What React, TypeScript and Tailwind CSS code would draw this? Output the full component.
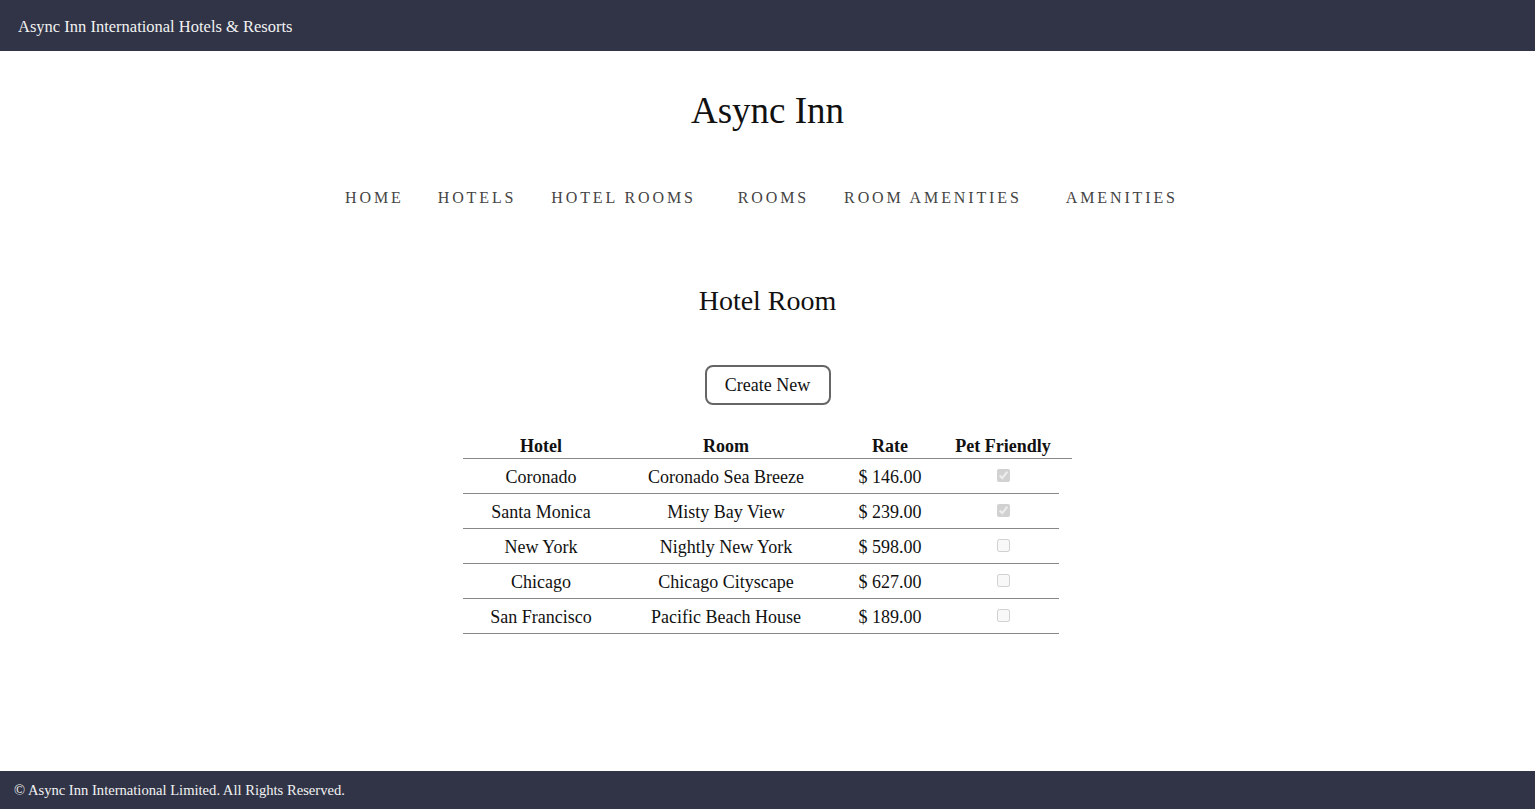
const rooms = [
  { hotel: 'Coronado', room: 'Coronado Sea Breeze', rate: '146.00', pets: true },
  { hotel: 'Santa Monica', room: 'Misty Bay View', rate: '239.00', pets: true },
  { hotel: 'New York', room: 'Nightly New York', rate: '598.00', pets: false },
  { hotel: 'Chicago', room: 'Chicago Cityscape', rate: '627.00', pets: false },
  { hotel: 'San Francisco', room: 'Pacific Beach House', rate: '189.00', pets: false },
];

const navItems = [
  { label: 'Home', className: '' },
  { label: 'Hotels', className: 'ml-[34px]' },
  { label: 'Hotel Rooms', className: 'ml-[35px]' },
  { label: 'Rooms', className: 'ml-[42px]' },
  { label: 'Room Amenities', className: 'ml-[35px]' },
  { label: 'Amenities', className: 'ml-[44px]' },
];

export default function App() {
  return (
    <div className="flex h-screen flex-col bg-white font-['Liberation_Serif',serif] text-[#111]">
      {/* Top bar */}
      <header className="flex h-[51px] shrink-0 items-center bg-[#303446] px-[18px] pt-[3px]">
        <span className="text-[16.5px] text-[#f2f2f2]">Async Inn International Hotels &amp; Resorts</span>
      </header>

      <main className="flex flex-1 flex-col items-center">
        <h1 className="mt-[36px] text-[37px] leading-[48px]">Async Inn</h1>

        <nav className="mt-[51px] flex items-center pr-[12px]">
          {navItems.map((item) => (
            <a
              key={item.label}
              href="#"
              className={`text-[16px] uppercase leading-[24px] tracking-[0.18em] text-[#444] ${item.className}`}
            >
              {item.label}
            </a>
          ))}
        </nav>

        <h2 className="mt-[73px] text-[28px] leading-[36px]">Hotel Room</h2>

        <button className="mt-[46px] h-[40px] w-[126px] rounded-[8px] border-2 border-[#666] text-[18px]">
          Create New
        </button>

        <table className="mt-[27px] border-collapse text-[18px]">
          <thead>
            <tr className="h-[26px] align-bottom">
              <th className="w-[156px] border-b border-[#888] font-bold leading-[24px]">Hotel</th>
              <th className="w-[214px] border-b border-[#888] font-bold leading-[24px]">Room</th>
              <th className="w-[114px] border-b border-[#888] font-bold leading-[24px]">Rate</th>
              <th className="w-[112px] whitespace-nowrap border-b border-[#888] font-bold leading-[24px]">Pet Friendly</th>
              <th className="w-[13px] border-b border-[#888]"></th>
            </tr>
          </thead>
          <tbody>
            {rooms.map((r) => (
              <tr key={r.hotel} className="h-[35px]">
                <td className="border-b border-[#888] pt-[3px] text-center">{r.hotel}</td>
                <td className="border-b border-[#888] pt-[3px] text-center">{r.room}</td>
                <td className="border-b border-[#888] pt-[3px] text-center">$ {r.rate}</td>
                <td className="border-b border-[#888] pt-[2px] text-center">
                  <input type="checkbox" checked={r.pets} disabled readOnly />
                </td>
                <td></td>
              </tr>
            ))}
          </tbody>
        </table>
      </main>

      <footer className="flex h-[38px] shrink-0 items-center bg-[#303446] px-[14px] pt-[1px]">
        <span className="text-[14.6px] text-[#f2f2f2]">© Async Inn International Limited. All Rights Reserved.</span>
      </footer>
    </div>
  );
}
